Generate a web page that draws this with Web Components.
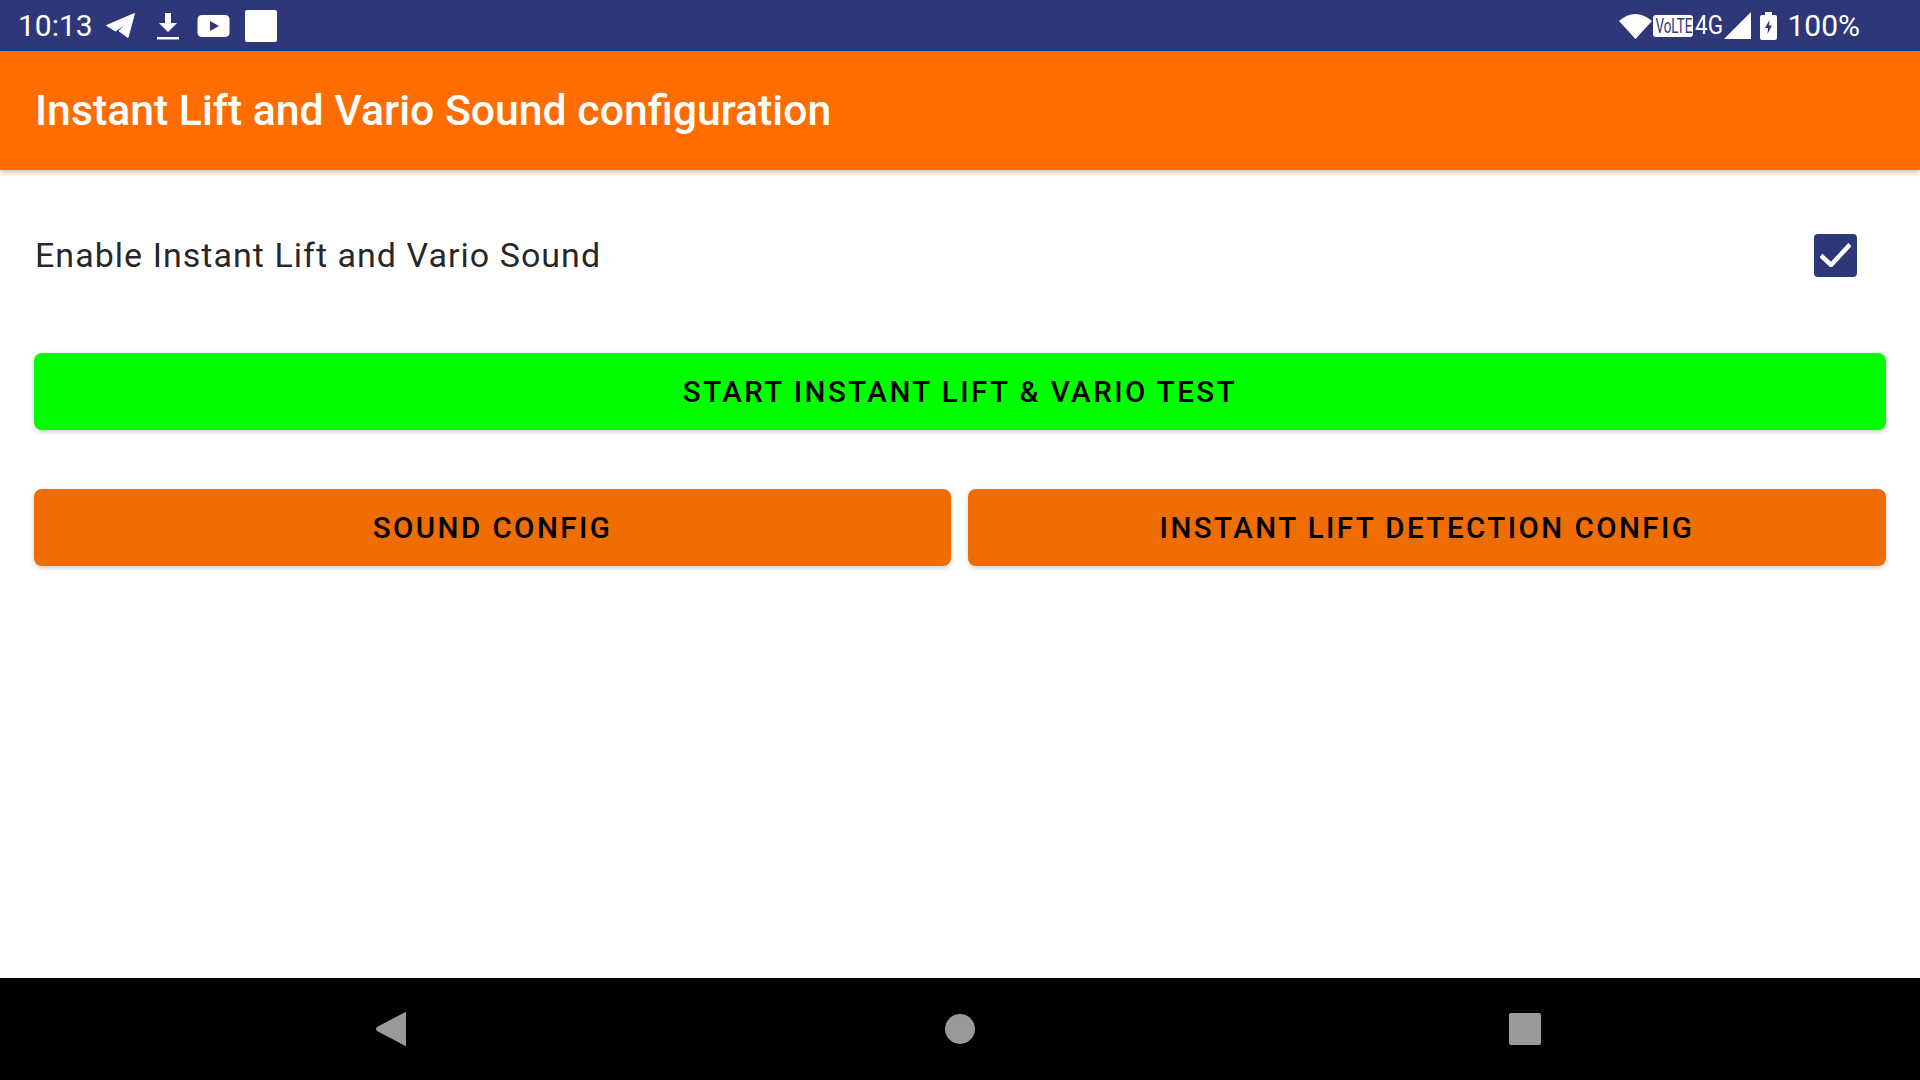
<!DOCTYPE html>
<html>
<head>
<meta charset="utf-8">
<style>
    html, body { margin: 0; height: 100%; background: #fff; font-family: Roboto, "Liberation Sans", sans-serif; }
    body { display: flex; flex-direction: column; height: 1080px; overflow: hidden; }
    main-content { flex: 1; }
</style>
</head>
<body>
<status-bar></status-bar>
<app-bar>Instant Lift and Vario Sound configuration</app-bar>
<main-content>
    <check-row>Enable Instant Lift and Vario Sound</check-row>
    <action-button class="test" color="#00ff00">START INSTANT LIFT &amp; VARIO TEST</action-button>
    <button-row>
        <action-button color="#ef6c00">SOUND CONFIG</action-button>
        <action-button color="#ef6c00">INSTANT LIFT DETECTION CONFIG</action-button>
    </button-row>
</main-content>
<nav-bar></nav-bar>

<script>
function define(name, html) {
    const template = document.createElement('template');
    template.innerHTML = html;
    customElements.define(name, class extends HTMLElement {
        connectedCallback() {
            if (this.shadowRoot) return;
            this.attachShadow({ mode: 'open' });
            this.shadowRoot.appendChild(template.content.cloneNode(true));
            if (this.hasAttribute('color')) this.style.setProperty('--btn', this.getAttribute('color'));
        }
    });
}

define('status-bar', `
    <style>
        :host {
            box-sizing: border-box;
            display: flex;
            align-items: center;
            height: 51px;
            padding: 0 60px 0 18px;
            background: #2d3779;
            color: #fff;
            font-size: 30px;
        }
        svg { display: block; flex: none; }
        .left, .right { display: flex; align-items: center; }
        .right { margin-left: auto; }
        .clock { width: 87px; }
        .tg { margin-left: -1px; }
        .dl { margin-left: 21px; }
        .yt { margin-left: 18px; }
        .sq { margin-left: 15px; width: 32px; height: 32px; border-radius: 2px; background: #fff; }
        .volte {
            box-sizing: border-box;
            width: 40px; height: 22px; margin-left: 1px; margin-top: 1px;
            background: #fff; color: #2d3779; border-radius: 3px;
            font-size: 21px; line-height: 22px; text-align: center;
            overflow: hidden; white-space: nowrap;
        }
        .volte span { display: inline-block; transform: scaleX(.64); transform-origin: center; margin: 0 -14px; }
        .fg { font-size: 25px; margin-left: 2px; display: inline-block; transform: scaleX(.9); transform-origin: left; width: 29px; }
        .bat { margin-left: 9px; }
        .pct { margin-left: 10px; }
    </style>
    <div class="left">
        <span class="clock">10:13</span>
        <svg class="tg" width="32" height="28" viewBox="0 0 32 28"><path fill="#fff" stroke="#fff" stroke-width="1" stroke-linejoin="round" d="M2.500 13.500 L30.500 1.500 L24 25.500 L15 19 L21.500 12 L11.500 19 Z"/></svg>
        <svg class="dl" width="22" height="28" viewBox="0 0 22 28"><path fill="#fff" d="M8 1h6v10h6l-9 9-9-9h6zM0 25h22v2.500H0z"/></svg>
        <svg class="yt" width="33" height="24" viewBox="0 0 33 24"><path fill="#fff" fill-rule="evenodd" d="M5 1h23q4 0 4.500 4v14q-.5 4-4.500 4H5q-4 0-4.500-4V5Q1 1 5 1zM13 7v10l9-5z"/></svg>
        <div class="sq"></div>
    </div>
    <div class="right">
        <svg width="33" height="28" viewBox="0 0 33 28"><path fill="#fff" d="M0 9 Q16 -5 33 9 L16.500 27 Z"/></svg>
        <span class="volte"><span>VoLTE</span></span>
        <span class="fg">4G</span>
        <svg width="27" height="27" viewBox="0 0 27 27"><path fill="#fff" d="M27 0V27H0Z"/></svg>
        <svg class="bat" width="17" height="28" viewBox="0 0 17 28"><path fill="#fff" fill-rule="evenodd" d="M5 0h7v3h3q2 0 2 2v21q0 2-2 2H2q-2 0-2-2V5q0-2 2-2h3zM9.500 8 5 16h3l-.5 6L12 13.500H9z"/></svg>
        <span class="pct">100%</span>
    </div>
`);

define('app-bar', `
    <style>
        :host {
            box-sizing: border-box;
            display: flex;
            align-items: center;
            height: 119px;
            padding: 0 35px 2px;
            background: #ff6d00;
            color: #fff;
            font-size: 42.750px;
            font-weight: 500;
            box-shadow: 0 2px 5px rgba(0,0,0,.25);
            position: relative;
        }
    </style>
    <slot></slot>
`);

define('check-row', `
    <style>
        :host {
            display: flex;
            align-items: center;
            justify-content: space-between;
            height: 88px;
            margin-top: 41px;
            padding: 0 63px 0 35px;
            color: rgba(0,0,0,.87);
            font-size: 34px;
            letter-spacing: 1.030px;
        }
        .box {
            width: 43px; height: 43px;
            border-radius: 4px;
            background: #2d3779;
            display: flex; align-items: center; justify-content: center;
        }
    </style>
    <slot></slot>
    <div class="box">
        <svg width="31" height="24" viewBox="0 0 31 24"><path d="M1 12.500 L11 22 L30 1.500" fill="none" stroke="#fff" stroke-width="4.500"/></svg>
    </div>
`);

define('action-button', `
    <style>
        :host {
            box-sizing: border-box;
            display: flex;
            align-items: center;
            justify-content: center;
            height: 77px;
            border-radius: 8px;
            background: var(--btn);
            color: #000;
            font-size: 29.500px;
            font-weight: 500;
            letter-spacing: 2.450px;
            box-shadow: 0 2px 5px rgba(0,0,0,.2);
        }
        :host(.test) { margin: 54px 34px 0 34px; }
    </style>
    <slot></slot>
`);

define('button-row', `
    <style>
        :host {
            display: grid;
            grid-template-columns: 917px 1fr;
            gap: 17px;
            margin: 59px 34px 0 34px;
        }
    </style>
    <slot></slot>
`);

define('main-content', `
    <style>
        :host { display: block; flex: 1; background: #fff; }
    </style>
    <slot></slot>
`);

define('nav-bar', `
    <style>
        :host {
            display: flex;
            align-items: center;
            justify-content: space-between;
            height: 102px;
            padding: 0 379px 0 375px;
            background: #000;
        }
        svg { display: block; }
        .home { margin-left: 4px; }
    </style>
    <svg width="32" height="36" viewBox="0 0 32 36"><path fill="#999" d="M31 1.500V34.500Q31 35.500 29.500 34.500L2 20Q0 18 2 16L29.500 1.500Q31 .5 31 1.500Z"/></svg>
    <svg class="home" width="30" height="30" viewBox="0 0 30 30"><circle cx="15" cy="15" r="15" fill="#999"/></svg>
    <svg width="32" height="32" viewBox="0 0 32 32"><rect width="32" height="32" rx="2" fill="#999"/></svg>
`);
</script>
</body>
</html>
